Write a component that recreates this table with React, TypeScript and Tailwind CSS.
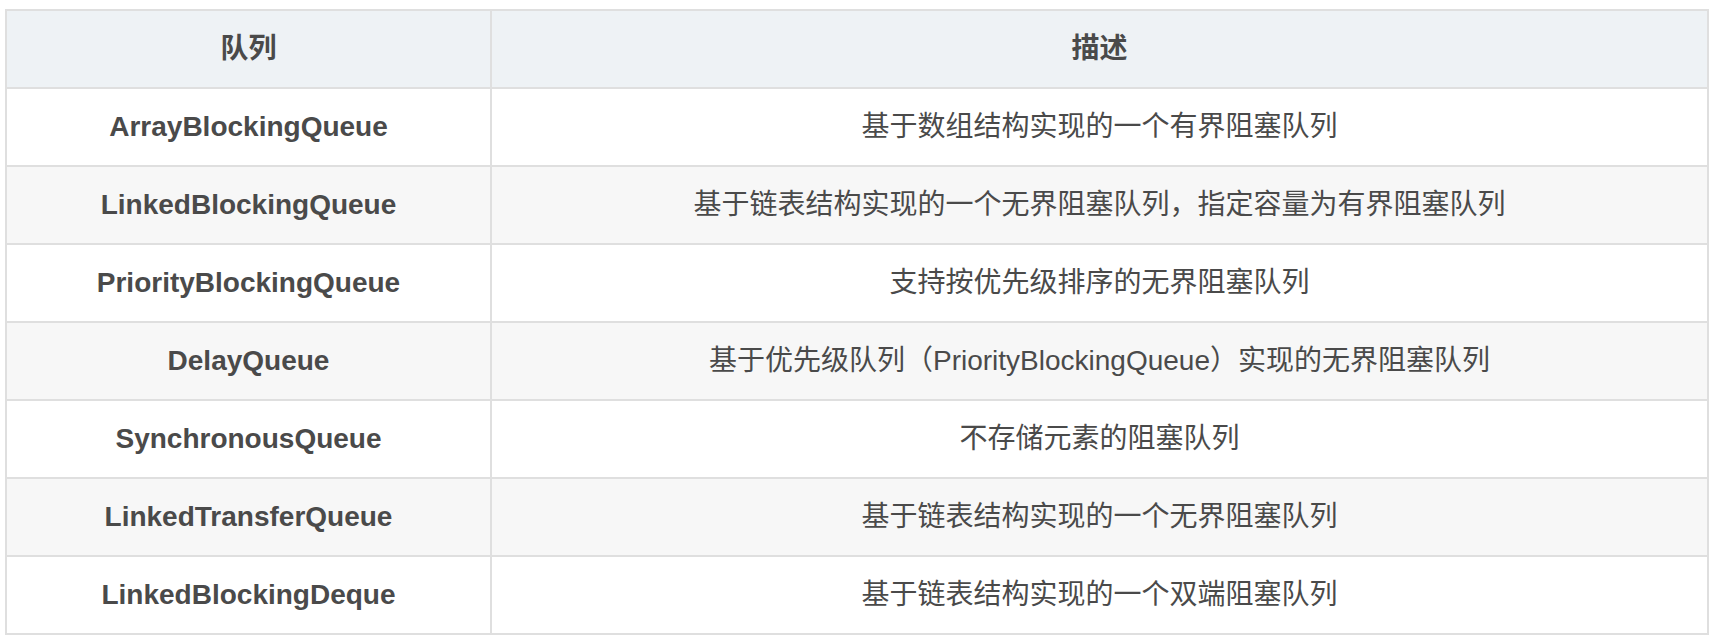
const rows: [string, string][] = [
  ["ArrayBlockingQueue", "基于数组结构实现的一个有界阻塞队列"],
  ["LinkedBlockingQueue", "基于链表结构实现的一个无界阻塞队列，指定容量为有界阻塞队列"],
  ["PriorityBlockingQueue", "支持按优先级排序的无界阻塞队列"],
  ["DelayQueue", "基于优先级队列（PriorityBlockingQueue）实现的无界阻塞队列"],
  ["SynchronousQueue", "不存储元素的阻塞队列"],
  ["LinkedTransferQueue", "基于链表结构实现的一个无界阻塞队列"],
  ["LinkedBlockingDeque", "基于链表结构实现的一个双端阻塞队列"],
];

const cell =
  "h-[78px] flex items-center justify-center border-r-2 border-b-2 border-[#dfdfdf] text-[28px] text-[#4a4a4a] whitespace-nowrap";

export default function App() {
  return (
    <div className="w-[1715px] h-[643px] bg-white pl-[5px] pt-[9px] font-['Liberation_Sans','Noto_Sans_CJK_SC',sans-serif]">
      <div className="grid grid-cols-[485px_1217px] w-[1704px] border-l-2 border-t-2 border-[#dfdfdf]">
        <div className={`${cell} bg-[#eef2f5] font-bold`}>队列</div>
        <div className={`${cell} bg-[#eef2f5] font-bold`}>描述</div>
        {rows.map(([name, desc], i) => {
          const bg = i % 2 === 1 ? "bg-[#f7f7f7]" : "bg-white";
          return (
            <div key={name} className="contents">
              <div className={`${cell} ${bg} font-bold`}>{name}</div>
              <div className={`${cell} ${bg}`}>{desc}</div>
            </div>
          );
        })}
      </div>
    </div>
  );
}
